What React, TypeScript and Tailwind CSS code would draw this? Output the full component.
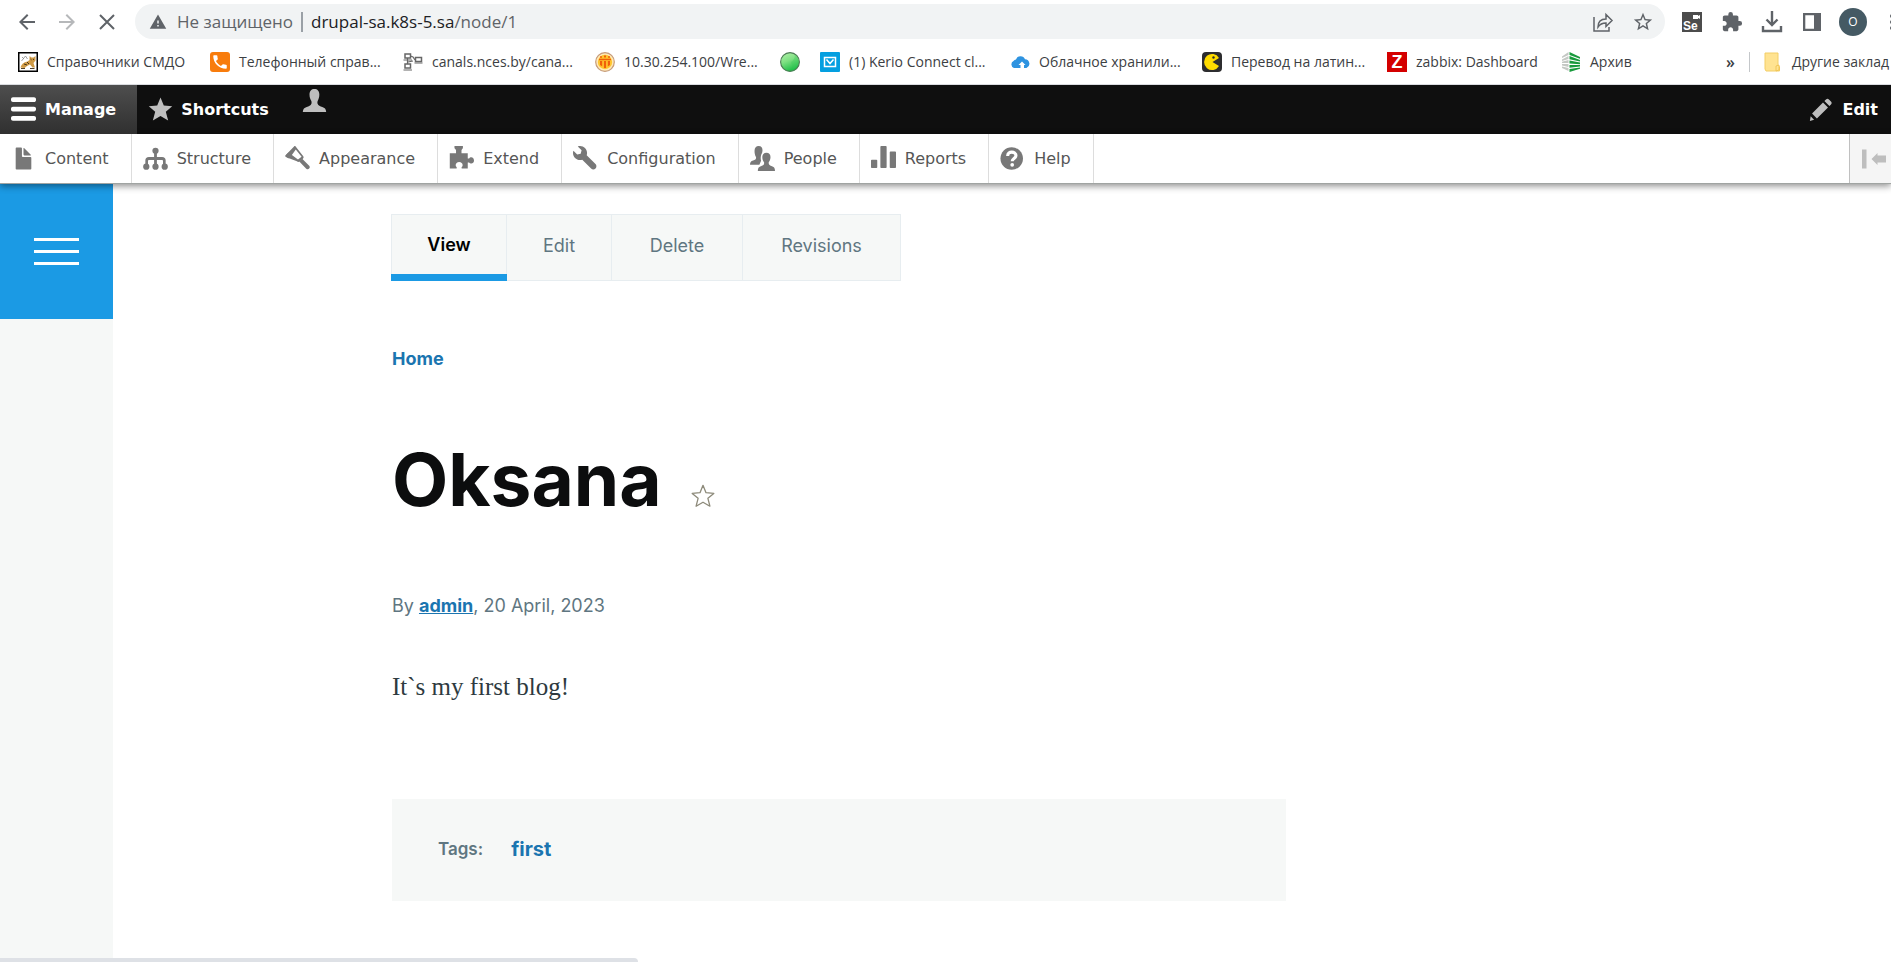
import React from "react";
import { MdArrowBack, MdArrowForward, MdExtension, MdWarning, MdStarBorder, MdPhone } from "react-icons/md";

type IconProps = { children: React.ReactNode; className?: string; viewBox?: string };

const Icon = ({ children, className = "size-[25px]", viewBox = "0 0 16 16" }: IconProps) => (
  <svg viewBox={viewBox} className={`shrink-0 ${className}`} fill="currentColor" aria-hidden="true">
    {children}
  </svg>
);

const NavButton = ({ label, children, className = "" }: { label: string; children: React.ReactNode; className?: string }) => (
  <button type="button" aria-label={label} className={`flex shrink-0 items-center justify-center text-[#5f6368] ${className}`}>
    {children}
  </button>
);

const bookmarks = [
  {
    label: "Справочники СМДО",
    width: "w-48",
    icon: (
      <Icon className="size-5" viewBox="0 0 20 20">
        <rect x="0.75" y="0.75" width="18.5" height="18.5" fill="#fff" stroke="#000" strokeWidth="1.5" />
        <path d="M2.500 15.500c1-3 3-5.500 7-6l2-1.500V4l2 1.500h2L17.500 4v4.500l-2 2.500 1.500 4.500h-2.500L12 12.500l-3 1.500-2.500 2z" fill="#cf9a45" />
        <path d="M12.500 7l1 .8m2.500-.8-1 .8M6 12l3 1M3 16.500h4m5 0h4.500M9 10l2 2" stroke="#3b2a12" strokeWidth="0.9" />
        <path d="M3.500 9l4-5 2 3M4 5l2 2" stroke="#888" strokeWidth="0.8" fill="none" />
      </Icon>
    ),
  },
  {
    label: "Телефонный справ...",
    width: "w-[193px]",
    icon: (
      <span className="flex size-5 shrink-0 items-center justify-center rounded-[3px] bg-[#f87c0c] text-white">
        <MdPhone size={18} />
      </span>
    ),
  },
  {
    label: "canals.nces.by/cana...",
    width: "w-48",
    icon: (
      <Icon className="size-5" viewBox="0 0 20 20">
        <g fill="none" stroke="#666" strokeWidth="1.500">
          <rect x="2" y="2" width="5.500" height="4" />
          <rect x="12.500" y="5.500" width="6" height="4" />
          <rect x="2" y="12" width="5.500" height="4" />
          <path d="M4.500 6v6M7.500 4l2.500 1 2 3M10 9l-5 1M0.500 8h8.500M0.500 18h8.500M11.500 11h8" strokeWidth="1.200" />
        </g>
      </Icon>
    ),
  },
  {
    label: "10.30.254.100/Wre...",
    width: "w-[185px]",
    icon: (
      <Icon className="size-5" viewBox="0 0 20 20">
        <circle cx="10" cy="10" r="9.300" fill="#ffe9b8" stroke="#c59a78" strokeWidth="1.200" />
        <circle cx="10" cy="10" r="7.200" fill="#ffc52e" />
        <path d="M4 6.800h12v1.400H4zM5 9h2.200v5.500L5 13zM8.900 9h2.200v7H8.900zM12.800 9H15v4l-2.200 1.500z" fill="#f0600a" />
        <path d="M5 4.200h2v1.500H5zM9 3.500h2v2H9zM13 4.200h2v1.500h-2z" fill="#f0600a" />
      </Icon>
    ),
  },
  {
    label: "",
    width: "w-10",
    icon: (
      <Icon className="size-5" viewBox="0 0 20 20">
        <defs>
          <linearGradient id="ball" x1="0" y1="0" x2="0.4" y2="1">
            <stop offset="0" stopColor="#b5f2ab" />
            <stop offset="0.5" stopColor="#7fe083" />
            <stop offset="1" stopColor="#22c04a" />
          </linearGradient>
        </defs>
        <circle cx="10" cy="10" r="9.400" fill="url(#ball)" stroke="#4d7a55" strokeWidth="1.100" />
        <path d="M11 10c2-1 4-4 4-7a8 8 0 0 1-2 14z" fill="#35c656" opacity=".3" />
      </Icon>
    ),
  },
  {
    label: "(1) Kerio Connect cl...",
    width: "w-[190px]",
    icon: (
      <Icon className="size-5" viewBox="0 0 20 20">
        <rect width="20" height="20" rx="1" fill="#049fe0" />
        <path d="M4.500 5.500h11v9h-11zM6.500 7.500l3.500 4 3.500-4" fill="none" stroke="#fff" strokeWidth="1.500" />
      </Icon>
    ),
  },
  {
    label: "Облачное хранили...",
    width: "w-48",
    icon: (
      <Icon className="size-5" viewBox="0 0 20 20">
        <path d="M4 16a3.800 3.800 0 0 1-.5-7A3 3 0 0 1 6 7.500a4.800 4.800 0 0 1 9-.2 4.500 4.500 0 0 1 1.500 8.700H14v-3h1.500L12 9.500 8.500 13h2v3z" fill="#2e93e0" />
      </Icon>
    ),
  },
  {
    label: "Перевод на латин...",
    width: "w-[185px]",
    icon: (
      <Icon className="size-5" viewBox="0 0 20 20">
        <rect width="20" height="20" rx="4" fill="#2d2d2f" />
        <path d="M10.500 10l6.500-4a8 8 0 1 0 0 8z" fill="#ffdc00" />
        <circle cx="11.500" cy="5.500" r="1.200" fill="#2d2d2f" />
      </Icon>
    ),
  },
  {
    label: "zabbix: Dashboard",
    width: "w-[174px]",
    icon: (
      <span className="flex size-5 shrink-0 items-center justify-center bg-[#d40000] font-['Liberation_Sans',sans-serif] text-lg leading-5 font-bold text-white">
        Z
      </span>
    ),
  },
  {
    label: "Архив",
    width: "w-24",
    icon: (
      <Icon className="size-5" viewBox="0 0 20 20">
        <path d="M7.500 0v3L1 6V4.500zM7.500 4v3L1 9V7.500zM7.500 8v3H1V9.800zM7.500 12v3L1 13.500V12zM7.500 16v3L1 16v-1.500z" fill="#c4c8c4" />
        <path d="M8.500 0L19 5v1.700L8.500 3zM8.500 4L19 8v1.600L8.500 7.200zM8.500 8.500L19 10.500v1.700l-10.500-.8zM8.500 13H19v1.500L8.500 15.800zM8.500 17L19 15.500v1.300L8.500 20z" fill="#189a3c" />
      </Icon>
    ),
  },
];

const adminLinks = [
  {
    label: "Content",
    icon: (
      <path d="M12.502 7h-5c-.276 0-.502-.225-.502-.5v-5c0-.275-.225-.5-.5-.5h-3c-.275 0-.5.225-.5.5v13.001c0 .275.225.5.5.5h9.002c.275 0 .5-.225.5-.5v-7.001c0-.275-.225-.5-.5-.5zM8.502 6h4c.275 0 .34-.159.146-.354l-4.293-4.292c-.195-.195-.353-.129-.353.146v4c0 .275.225.5.5.5z" />
    ),
  },
  {
    label: "Structure",
    icon: (
      <>
        <circle cx="8" cy="3.100" r="2" />
        <path d="M7.100 4h1.800v3h3.300c1.500 0 2.300.8 2.300 2.200v3h-1.700V9.500c0-.4-.2-.6-.6-.6H8.900v4H7.100v-4H3.800c-.4 0-.6.2-.6.6v2.700H1.500v-3C1.500 7.800 2.300 7 3.800 7h3.300z" />
        <circle cx="2.100" cy="13.200" r="2" />
        <circle cx="8" cy="13.200" r="2" />
        <circle cx="13.900" cy="13.200" r="2" />
      </>
    ),
  },
  {
    label: "Appearance",
    icon: (
      <>
        <path fillRule="evenodd" d="M5.800.3c.3-.3.700-.3 1 0l4.900 6.300c.4.600.2 1.200-.4 1.700L9.400 9.800c-.6.500-1.200.5-1.800-.1L.5 7c-.4-.4-.4-.8 0-1.200zM4.400 5.800l3.900 2.900 2.300-1.800L6.900 2.200z" />
        <path d="M2.200 4.100l3.700 3.200L2 7.900.3 6.300z" />
        <path d="M9 9.700l2-1.600 4.500 4.500c1.100 1.200-.5 3-1.900 1.900z" />
      </>
    ),
  },
  {
    label: "Extend",
    icon: (
      <path d="M3.500 0h5.400v1.200c0 .5-.9.800-.9 1.500v2h4v3.300h.9c.5-1.100 3-1.200 3.100 1.200s-2.400 2.500-3.100 1.300H12v3.900H8.200c-.3-.5-.2-.9.3-1.300.7-1.500-.3-2.900-2-2.900s-2.700 1.500-2 2.900c.5.400.6.8.3 1.300H.5V4.700h4v-2c0-.7-1-1-1-1.500z" />
    ),
  },
  {
    label: "Configuration",
    icon: (
      <path d="M14.416 11.586l-.01-.008v-.001l-5.656-5.656c.15-.449.252-.921.252-1.421 0-2.485-2.016-4.500-4.502-4.500-.505 0-.981.102-1.434.255l2.431 2.431-.588 2.196-2.196.588-2.445-2.445c-.162.464-.268.956-.268 1.475 0 2.486 2.014 4.500 4.500 4.500.5 0 .972-.102 1.421-.251l5.667 5.665c.781.781 2.047.781 2.828 0s.781-2.047 0-2.828z" />
    ),
  },
  {
    label: "People",
    icon: (
      <>
        <path d="M5.500 0c1.800 0 2.600 1.300 2.500 3-.1.900-.3 1.600-.7 2.200-.6 1.400-.5 3.200-.2 4.200L6 12H0c0-1.500.5-2.300 2-2.700 1.300-.3 2-.9 1.900-2.100-.8-1.500-1-2.700-1-4.200C2.900 1.100 4 0 5.500 0z" />
        <path d="M10.500 4.300c1.900 0 2.700 1.300 2.600 3-.1 1.400-.5 2.300-1.100 3.100-.2 1.300.3 2 1.700 2.400 1.600.4 2.300 1.300 2.300 3.200H5c0-1.900.7-2.800 2.300-3.200 1.500-.4 1.900-1.200 1.700-2.400-.7-.9-1.100-2-1.100-3.100-.1-1.700.9-3 2.600-3z" />
      </>
    ),
  },
  {
    label: "Reports",
    icon: (
      <path d="M4 13.529c0 .275-.225.5-.5.5h-3c-.275 0-.5-.225-.5-.5v-4.250c0-.275.225-.5.5-.5h3c.275 0 .5.225.5.5v4.250zM10.002 13.529c0 .275-.225.5-.5.5h-3.002c-.275 0-.5-.225-.5-.5v-13c0-.275.225-.5.5-.5h3.002c.275 0 .5.225.5.5v13zM16.002 13.529c0 .275-.225.5-.5.5h-3c-.275 0-.5-.225-.5-.5v-9.500c0-.275.225-.5.5-.5h3c.275 0 .5.225.5.5v9.500z" />
    ),
  },
  {
    label: "Help",
    icon: (
      <>
        <circle cx="7.500" cy="8" r="7.200" />
        <path d="M4.900 6.400c0-3.400 5.300-3.200 5.300-.3 0 1.900-2.400 1.900-2.400 3.700" fill="none" stroke="#fff" strokeWidth="2" />
        <circle cx="7.800" cy="12" r="1.200" fill="#fff" />
      </>
    ),
  },
];

const tabs = [
  { label: "View", width: "w-[116px]", active: true },
  { label: "Edit", width: "w-[105px]", active: false },
  { label: "Delete", width: "w-[131px]", active: false },
  { label: "Revisions", width: "w-[158px]", active: false },
];

const BrowserBar = () => (
  <header className="font-['Open_Sans','Noto_Sans',sans-serif]">
    <div className="flex h-[43px] items-center pl-[15px]">
      <NavButton label="Назад" className="w-6"><MdArrowBack size={24} /></NavButton>
      <NavButton label="Вперёд" className="ml-4 w-6 opacity-45"><MdArrowForward size={24} /></NavButton>
      <NavButton label="Остановить" className="ml-4 w-6">
        <svg viewBox="0 0 24 24" className="size-6" fill="none" stroke="currentColor" strokeWidth="2"><path d="M5 5l14 14M19 5L5 19" /></svg>
      </NavButton>
      <div className="ml-4 flex h-[35px] flex-1 items-center rounded-full bg-[#f1f3f4] pr-2.5 pl-3.5 text-[17px]">
        <MdWarning size={18} className="shrink-0 text-[#5f6368]" />
        <span className="ml-2.5 whitespace-nowrap text-[#5f6368]">Не защищено</span>
        <span className="mx-2 h-5 w-0.5 shrink-0 bg-[#9aa0a6]" />
        <span className="flex-1 whitespace-nowrap text-[#5f6368]">
          <span className="text-[#202124]">drupal-sa.k8s-5.sa</span>/node/1
        </span>
        <NavButton label="Поделиться" className="w-6">
          <svg viewBox="0 0 24 24" className="size-6" fill="none" stroke="currentColor" strokeWidth="1.500">
            <path d="M3 7v14h15v-4M7 17c0-5 3-8 8-8V4.500l6 6-6 6V13c-4 0-6 1-8 4z" />
          </svg>
        </NavButton>
        <NavButton label="Добавить в закладки" className="ml-4 w-6"><MdStarBorder size={22} /></NavButton>
      </div>
      <div className="flex w-[226px] shrink-0 items-center overflow-hidden pl-4">
        <NavButton label="Selenium IDE" className="w-[22px]">
          <svg viewBox="0 0 20 20" className="size-5">
            <rect width="20" height="20" fill="#4c4c4c" />
            <path d="M11 3h5v1l2-1v4l-2-1v1h-5z" fill="#fff" />
            <text x="1" y="17.500" fontSize="12" fontWeight="700" fill="#fff" fontFamily="Liberation Sans">Se</text>
          </svg>
        </NavButton>
        <NavButton label="Расширения" className="ml-[18px] w-[22px]"><MdExtension size={22} /></NavButton>
        <NavButton label="Загрузки" className="ml-[18px] w-[22px]">
          <svg viewBox="0 0 22 22" className="size-[22px]" fill="none" stroke="currentColor" strokeWidth="2.400">
            <path d="M11 0v13M5.500 8.500L11 14l5.500-5.500M2 15v5h18v-5" />
          </svg>
        </NavButton>
        <NavButton label="Боковая панель" className="ml-[18px] w-[22px]">
          <svg viewBox="0 0 20 20" className="size-5" fill="currentColor">
            <path fillRule="evenodd" d="M1 1h18v18H1zM3.300 3.300v13.400H12V3.300z" />
          </svg>
        </NavButton>
        <button type="button" className="ml-4 size-7 shrink-0 rounded-full bg-[#455a64] text-xs text-white">O</button>
        <NavButton label="Меню" className="ml-[23px] w-1">
          <svg viewBox="0 0 4 16" className="h-4 w-1" fill="currentColor"><circle cx="2" cy="2" r="2" /><circle cx="2" cy="8" r="2" /><circle cx="2" cy="14" r="2" /></svg>
        </NavButton>
      </div>
    </div>
    <nav className="flex h-[42px] items-center overflow-hidden border-b border-[#dadce0] pb-1 pl-[18px] text-sm whitespace-nowrap text-[#3c4043]">
      {bookmarks.map((b) => (
        <a key={b.width + b.label} href="#" aria-label={b.label || "Закладка"} className={`flex shrink-0 items-center gap-[9px] ${b.width}`}>
          {b.icon}
          {b.label}
        </a>
      ))}
      <div className="ml-auto flex w-[165px] shrink-0 items-center">
        <button type="button" aria-label="Показать скрытые закладки" className="text-base font-semibold">»</button>
        <span className="ml-3.5 h-5 w-px shrink-0 bg-[#c4c7ca]" />
        <a href="#" className="ml-3.5 flex items-center gap-3">
          <Icon className="h-5 w-4" viewBox="0 0 16 20">
            <path d="M1 1h13v12l1.500 2v4H2L1 17z" fill="#ffe391" stroke="#f3ce66" />
            <path d="M12 19v-5l3-1v5z" fill="#ffe391" stroke="#eebf4b" strokeWidth=".8" />
          </Icon>
          Другие заклад
        </a>
      </div>
    </nav>
  </header>
);

const AdminToolbar = () => (
  <div className="relative z-10 font-['DejaVu_Sans',sans-serif] text-base">
    <div className="flex h-[49px] bg-[#0f0f0f] font-bold text-white">
      <a href="#" className="flex items-center gap-[9px] bg-linear-to-b from-[#4e4e4e] to-[#303030] pr-[21px] pl-[11px]">
        <Icon>
          <path d="M14.752 6.200h-13.502c-.69 0-1.250.56-1.250 1.250v.5c0 .689.56 1.250 1.250 1.250h13.502c.689 0 1.250-.561 1.250-1.250v-.5c0-.69-.561-1.250-1.250-1.250zM14.752.2h-13.502c-.69 0-1.250.56-1.250 1.250v.5c0 .69.56 1.250 1.250 1.250h13.502c.689 0 1.250-.56 1.250-1.250v-.5c0-.69-.561-1.250-1.250-1.250zM14.752 12.200h-13.502c-.69 0-1.250.561-1.250 1.250v.5c0 .689.56 1.250 1.250 1.250h13.502c.689 0 1.250-.561 1.250-1.250v-.5c0-.689-.561-1.250-1.250-1.250z" />
        </Icon>
        Manage
      </a>
      <a href="#" className="flex items-center gap-2 pr-[22px] pl-[11px]">
        <Icon className="size-[25px] text-[#bebebe]">
          <path d="M8 .3l2.100 5.200 5.400.4-4.100 3.500 1.500 5.700L8 12.200l-4.900 2.900 1.500-5.700L.5 5.900l5.400-.4z" />
        </Icon>
        Shortcuts
      </a>
      <a href="#" aria-label="User" className="px-[11px] pt-[3px]">
        <Icon className="size-[25px] text-[#bebebe]">
          <path d="M7.900.6c2 0 3.200 1.300 3.200 3.500 0 1.700-.5 3-1 4-.3.700-.3 1.500-.1 2 .4 1.200 1.600 1.700 3 2 1.500.4 2.300 1.300 2.500 3.200H.5c.2-1.900 1-2.800 2.500-3.200 1.400-.3 2.600-.8 3-2 .2-.5.200-1.300-.1-2-.6-1-1.100-2.300-1.100-4C4.800 1.900 6 .6 7.900.6z" />
        </Icon>
      </a>
      <button type="button" className="ml-auto flex items-center gap-[9px] pr-[13px]">
        <Icon className="size-[25px] text-[#bebebe]">
          <path d="M1.700 12.300l2.200 2.200-2.700.8zM2.600 10.500l7-7 3.200 3.200-7.100 7zM10.500 2.600l1-1c.7-.6 1.300-.6 1.900 0l1.300 1.300c.6.600.6 1.300 0 1.900l-1 1z" />
        </Icon>
        Edit
      </button>
    </div>
    <nav className="flex h-[50px] border-b border-[#a0a4a2] bg-white text-[#565656] shadow-[0_2px_7px_rgba(0,0,0,0.45)]">
      {adminLinks.map((l) => (
        <a key={l.label} href="#" className="flex items-center gap-[9px] border-r border-[#dddddd] pr-[22px] pl-[11px]">
          <Icon className="size-[25px] text-[#787878]">{l.icon}</Icon>
          {l.label}
        </a>
      ))}
      <button type="button" aria-label="Vertical orientation" className="ml-auto w-[42px] border-l border-[#c0c0c0] bg-[#f5f5f5] pl-3">
        <Icon className="h-5 w-[26px] text-[#bebebe]" viewBox="0 0 26 20">
          <path d="M0 .5h4.500v19H0zM9.500 10l6-6v2.500H24v7h-8.500V16z" />
        </Icon>
      </button>
    </nav>
  </div>
);

export default function App() {
  return (
    <div className="flex min-h-screen flex-col overflow-hidden bg-white">
      <BrowserBar />
      <AdminToolbar />
      <div className="flex flex-1 font-['Inter',sans-serif] text-[18px] leading-6 text-[#5f7681]">
        <aside className="w-[113px] shrink-0 bg-[#f6f8f7]">
          <button type="button" aria-label="Main menu" className="flex h-[135px] w-full flex-col items-center justify-center gap-[9px] bg-[#1b9ae4]">
            <span className="h-[3px] w-[45px] bg-white" />
            <span className="h-[3px] w-[45px] bg-white" />
            <span className="h-[3px] w-[45px] bg-white" />
          </button>
        </aside>
        <main className="min-w-0 flex-1 pt-[30px] pr-8 pb-[60px] pl-[278px]">
          <nav className="flex h-[67px]">
            {tabs.map((t) => (
              <a
                key={t.label}
                href="#"
                className={`flex flex-col bg-[#f6f8f7] ${t.width} ${t.active ? "font-semibold text-black" : ""}`}
              >
                <span
                  className={`flex flex-1 items-center justify-center border-t border-r border-[#e7edf0] ${
                    t.active ? "border-l" : "border-b pb-1"
                  }`}
                >
                  {t.label}
                </span>
                {t.active && <span className="h-[7px] bg-[#1b9ae4]" />}
              </a>
            ))}
          </nav>
          <div className="pl-px">
            <nav className="mt-[66px]">
              <a href="#" className="font-bold text-[#1b75b0]">Home</a>
            </nav>
            <div className="mt-[73px] flex items-end gap-[29px]">
              <h1 className="text-[73px] leading-[72px] font-bold text-[#0c0d0e]">Oksana</h1>
              <button type="button" aria-label="Add to shortcuts" className="pb-2 text-[#8d8a7a]">
                <svg viewBox="0 0 24 24" className="size-6" fill="none" stroke="currentColor" strokeWidth="1.300" strokeLinejoin="round">
                  <path d="M12 1.300l3 7.400 7.800.7-5.900 4.900 2 7.900L12 18.200l-6.900 4 2-7.900-5.900-4.900 7.800-.7z" />
                </svg>
              </button>
            </div>
            <p className="mt-[78px]">
              By <a href="#" className="font-bold text-[#1b75b0] underline">admin</a>, 20 April, 2023
            </p>
            <p className="mt-[53px] font-['Liberation_Serif',serif] text-[25px] leading-8 text-[#2e3a40]">It`s my first blog!</p>
            <div className="mt-24 flex h-[102px] w-full max-w-[894px] items-center gap-7 bg-[#f6f8f7] px-[46px] pb-0.5">
              <span className="text-[17px] font-semibold">Tags:</span>
              <a href="#" className="text-xl font-bold text-[#1b75b0]">first</a>
            </div>
          </div>
        </main>
      </div>
      <div className="fixed bottom-0 left-0 z-20 h-1 w-[638px] rounded-tr bg-[#dee1e6]" />
    </div>
  );
}
